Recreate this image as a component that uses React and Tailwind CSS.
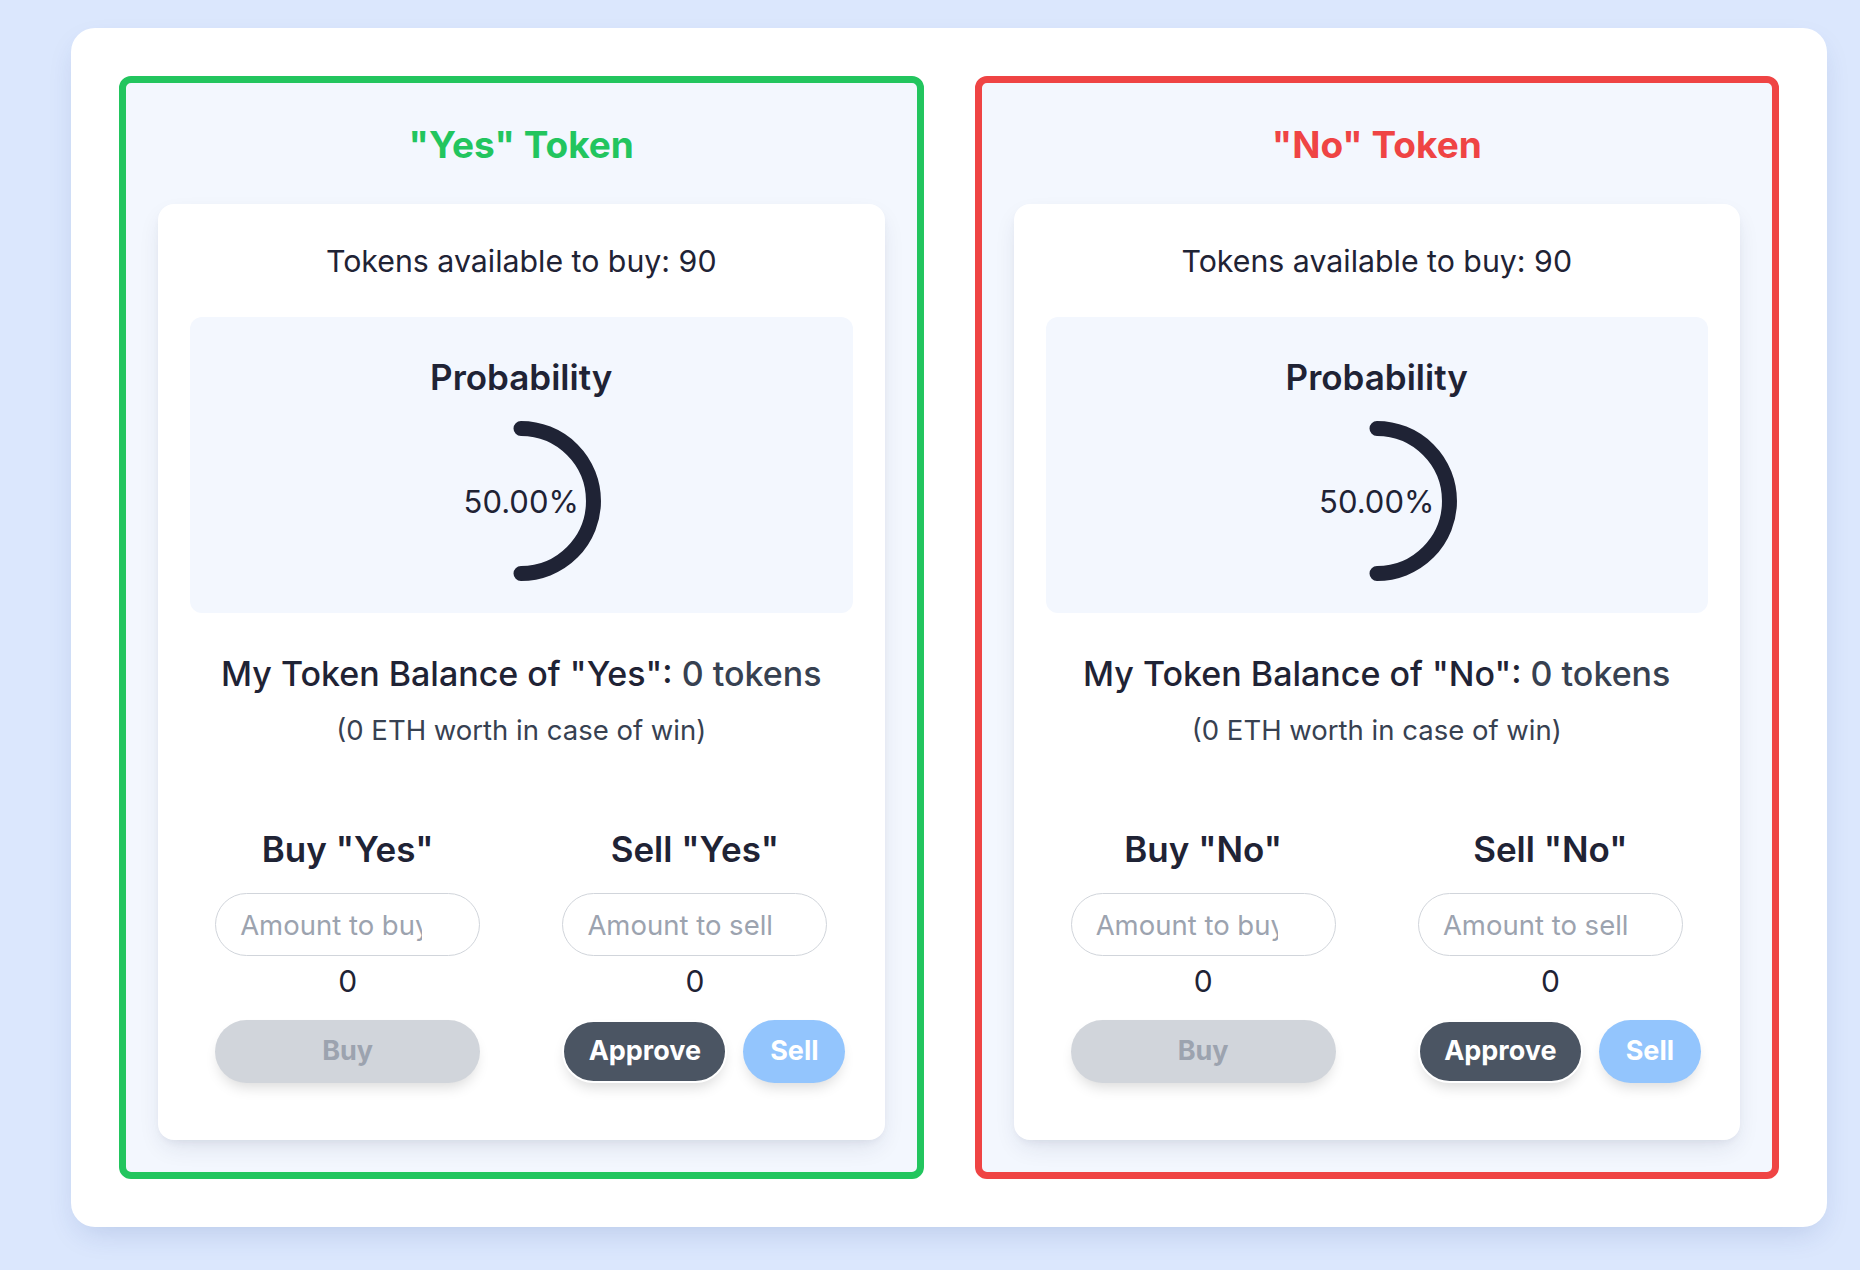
import React from "react";

const FONT = { fontFamily: 'Inter, "Noto Sans", "Liberation Sans", sans-serif' };

function Arc() {
  return (
    <div className="relative mx-auto mt-[17px] h-[160px] w-[160px]">
      <svg width="160" height="160" viewBox="0 0 160 160" className="absolute inset-0">
        <path
          d="M 80 7.5 A 72.5 72.5 0 0 1 80 152.5"
          fill="none"
          stroke="#1f2335"
          strokeWidth="15"
          strokeLinecap="round"
        />
      </svg>
      <div className="absolute inset-0 flex items-center justify-center text-[31px] leading-none text-[#1f2335]">
        50.00%
      </div>
    </div>
  );
}

function TradeColumn({ title, placeholder, padClass, children }) {
  return (
    <div className="flex flex-col items-center">
      <div className="text-[35px] font-semibold leading-[44px] text-[#1f2335]">{title}</div>
      <input
        type="text"
        placeholder={placeholder}
        className={`mt-[22px] h-[63px] w-[265px] rounded-full border-[1.5px] border-[#d1d5db] bg-white pl-[24px] ${padClass} text-[27.5px] text-[#1f2335] outline-none placeholder:text-[#9ca3af]`}
        style={FONT}
      />
      <div className="mt-[7px] text-[30px] leading-[36px] text-[#1f2335]">0</div>
      <div className="mt-[21px] flex w-[265px] gap-4">{children}</div>
    </div>
  );
}

function TokenPanel({ name, borderClass, titleClass }) {
  return (
    <div className={`rounded-xl border-[7px] ${borderClass} bg-[#f3f7fe] p-8`}>
      <div className={`mb-[39px] mt-[10px] text-center text-[37px] font-bold leading-[40px] ${titleClass}`}>
        "{name}" Token
      </div>
      <div className="rounded-2xl bg-white px-8 pt-8 pb-[57px] shadow-[0_10px_25px_-5px_rgba(30,41,80,0.12),0_4px_10px_-4px_rgba(30,41,80,0.08)]">
        <div className="mt-[7px] text-center text-[30.3px] leading-[36px] text-[#1f2335]">
          Tokens available to buy: 90
        </div>
        <div className="mt-[38px] rounded-xl bg-[#f3f7fe] pt-[33px] pb-8">
          <div className="text-center text-[35px] font-semibold leading-[54px] text-[#1f2335]">
            Probability
          </div>
          <Arc />
        </div>
        <div className="mt-[41px] text-center text-[34px] font-medium leading-[40px] text-[#1f2335]">
          My Token Balance of "{name}": <span className="text-[#374151]">0 tokens</span>
        </div>
        <div className="mt-[18px] text-center text-[27.5px] leading-[36px] text-[#374151]">
          (0 ETH worth in case of win)
        </div>
        <div className="mt-[79px] grid grid-cols-2 gap-8">
          <TradeColumn title={`Buy "${name}"`} placeholder="Amount to buy" padClass="pr-[57px]">
            <button
              className="h-[63px] w-[265px] rounded-full bg-[#d1d5db] text-[27px] font-bold text-[#9ca3af] shadow-[0_8px_14px_-4px_rgba(0,0,0,0.15)]"
              style={FONT}
            >
              Buy
            </button>
          </TradeColumn>
          <TradeColumn title={`Sell "${name}"`} placeholder="Amount to sell" padClass="pr-[50px]">
            <button
              className="h-[63px] w-[165px] shrink-0 rounded-full border-2 border-white bg-[#4b5563] text-[27px] font-bold text-white shadow-[0_8px_14px_-4px_rgba(0,0,0,0.15)]"
              style={FONT}
            >
              Approve
            </button>
            <button
              className="h-[63px] w-[102px] shrink-0 rounded-full bg-[#93c5fd] text-[27px] font-bold text-white shadow-[0_8px_14px_-4px_rgba(0,0,0,0.15)]"
              style={FONT}
            >
              Sell
            </button>
          </TradeColumn>
        </div>
      </div>
    </div>
  );
}

export default function App() {
  return (
    <div className="min-h-screen bg-[#dbe7fd] pl-[71px] pt-[28px]" style={FONT}>
      <div className="w-[1756px] rounded-3xl bg-white p-12 shadow-[0_12px_30px_-8px_rgba(30,60,140,0.18)]">
        <div className="grid grid-cols-2 gap-[51px]">
          <TokenPanel name="Yes" borderClass="border-[#22c55e]" titleClass="text-[#22c55e]" />
          <TokenPanel name="No" borderClass="border-[#ef4444]" titleClass="text-[#ef4444]" />
        </div>
      </div>
    </div>
  );
}
